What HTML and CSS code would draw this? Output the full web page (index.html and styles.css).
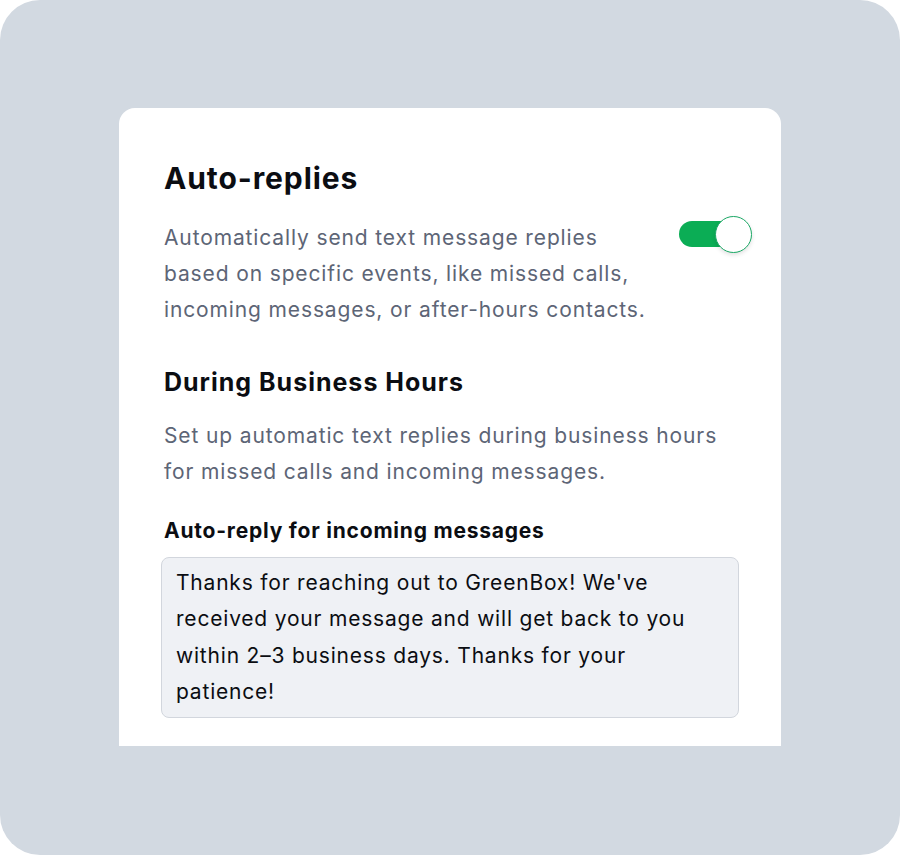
FILE: index.html
```html
<!DOCTYPE html>
<html lang="en">
<head>
<meta charset="UTF-8">
<meta name="viewport" content="width=device-width, initial-scale=1.0">
<title>Auto-replies</title>
<link rel="stylesheet" href="styles.css">
</head>
<body>
    <div class="frame">
        <div class="card">
            <!-- Auto-replies master switch -->
            <h2 class="title">Auto-replies</h2>
            <div class="setting-row">
                <p class="muted intro">Automatically send text message replies based on specific events, like missed calls, incoming messages, or after-hours contacts.</p>
                <label class="toggle">
                    <input type="checkbox" checked>
                    <span class="track"></span>
                    <span class="knob"></span>
                </label>
            </div>

            <!-- Business hours -->
            <h3 class="section-title">During Business Hours</h3>
            <p class="muted section-desc">Set up automatic text replies during business hours for missed calls and incoming messages.</p>

            <label class="field-label" for="incoming-reply">Auto-reply for incoming messages</label>
            <textarea id="incoming-reply" class="reply-box" rows="4">Thanks for reaching out to GreenBox! We've received your message and will get back to you within 2–3 business days. Thanks for your patience!</textarea>
        </div>
    </div>
</body>
</html>
```

FILE: styles.css
```css
* {
    margin: 0;
    padding: 0;
    box-sizing: border-box;
}

body {
    width: 900px;
    height: 855px;
    background: #ffffff;
    font-family: 'Inter', 'Noto Sans', sans-serif;
    color: #0b0d12;
}

.frame {
    height: 100%;
    background: #d2d9e1;
    border-radius: 40px;
    padding-top: 108px;
    padding-left: 119px;
    overflow: hidden;
}

.card {
    width: 662px;
    height: 638px;
    background: #ffffff;
    border-radius: 16px 16px 0 0;
    padding: 50px 29px 0 45px;
}

.title {
    font-size: 30px;
    font-weight: 700;
    line-height: 40px;
    letter-spacing: 0.9px;
}

.muted {
    color: #5d6576;
    font-size: 21px;
    line-height: 36px;
    letter-spacing: 0.87px;
}

.setting-row {
    display: flex;
    justify-content: space-between;
    align-items: flex-start;
    margin-top: 22px;
}

.intro {
    width: 490px;
}

/* Switch */
.toggle {
    position: relative;
    width: 74px;
    height: 38px;
    margin-top: -4px;
    flex-shrink: 0;
}

.toggle input {
    display: none;
}

.track {
    position: absolute;
    left: 1px;
    top: 5px;
    width: 62px;
    height: 26px;
    border-radius: 13px;
    background: #0bad55;
}

.knob {
    position: absolute;
    right: 0;
    top: 0;
    width: 37px;
    height: 37px;
    border-radius: 50%;
    background: #ffffff;
    border: 1px solid #1aa865;
    box-shadow: 0 2px 4px rgba(0, 0, 0, 0.12);
}

.section-title {
    margin-top: 37px;
    font-size: 25px;
    font-weight: 700;
    line-height: 34px;
    letter-spacing: 1px;
}

.section-desc {
    margin-top: 19px;
    width: 570px;
}

.field-label {
    display: block;
    margin-top: 26px;
    font-size: 21px;
    font-weight: 700;
    line-height: 30px;
    letter-spacing: 0.78px;
}

.reply-box {
    display: block;
    width: 578px;
    height: 161px;
    margin: 11px 0 0 -3px;
    padding: 7px 26px 6px 14px;
    background: #eff1f5;
    border: 1px solid #d2d6dd;
    border-radius: 8px;
    font-family: inherit;
    font-size: 21px;
    line-height: 36.3px;
    letter-spacing: 0.8px;
    color: #0b0d12;
    resize: none;
    overflow: hidden;
}
```
